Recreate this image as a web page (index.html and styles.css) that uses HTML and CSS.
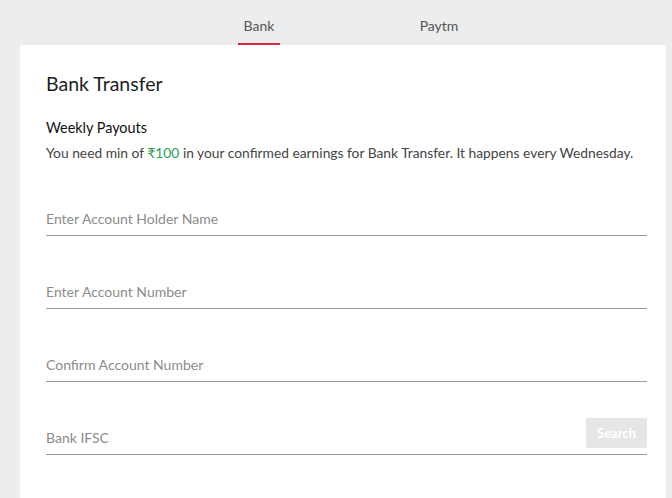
FILE: index.html
```html
<!DOCTYPE html>
<html>
<head>
<meta charset="utf-8">
<link rel="stylesheet" href="styles.css">
</head>
<body>
<nav class="tabs">
  <div class="tab"><span class="tab-label active">Bank</span></div>
  <div class="tab"><span class="tab-label">Paytm</span></div>
</nav>
<main class="card">
  <h1 class="title">Bank Transfer</h1>
  <h2 class="subtitle">Weekly Payouts</h2>
  <p class="desc">You need min of <span class="amount">₹100</span> in your confirmed earnings for Bank Transfer. It happens every Wednesday.</p>
  <form class="form">
    <div class="field"><input class="input" type="text" placeholder="Enter Account Holder Name"></div>
    <div class="field"><input class="input" type="text" placeholder="Enter Account Number"></div>
    <div class="field"><input class="input" type="text" placeholder="Confirm Account Number"></div>
    <div class="field field-search"><input class="input" type="text" placeholder="Bank IFSC"><button type="button" class="search-btn">Search</button></div>
  </form>
</main>
</body>
</html>
```
FILE: styles.css
```css
html, body {
  margin: 0;
  padding: 0;
  height: 100%;
}
body {
  background: #ebedee;
  font-family: Lato, "Open Sans", sans-serif;
  color: #222;
  display: flex;
  flex-direction: column;
}
.tabs {
  display: flex;
  height: 45px;
  padding-left: 169px;
}
.tab {
  width: 180px;
  display: flex;
  justify-content: center;
  align-items: flex-end;
}
.tab-label {
  font-size: 14px;
  color: #555;
  padding: 3px 6px 0;
  height: 32px;
  line-height: 20px;
  box-sizing: border-box;
  border-bottom: 2px solid transparent;
}
.tab-label.active {
  border-bottom-color: #d7263f;
}
.card {
  flex: 1;
  background: #fff;
  margin-left: 20px;
  width: 646px;
  box-sizing: border-box;
  padding: 27px 19px 0 26px;
}
.title {
  margin: 0;
  font-size: 19.5px;
  line-height: 24px;
  font-weight: 400;
  color: #1e1e1e;
}
.subtitle {
  margin: 23px 0 0;
  font-size: 14.4px;
  line-height: 18px;
  font-weight: 400;
  color: #111;
}
.desc {
  margin: 7px 0 0;
  font-size: 13.8px;
  line-height: 18px;
  color: #444;
}
.amount {
  color: #2b9b58;
}
.form {
  margin-top: 1px;
  display: flex;
  flex-direction: column;
}
.field {
  height: 73px;
  display: flex;
  align-items: flex-end;
  position: relative;
}
.input {
  flex: 1;
  border: 0;
  border-bottom: 1px solid #999;
  padding: 0 0 7px;
  font-family: inherit;
  font-size: 14px;
  line-height: 18px;
  color: #333;
  outline: none;
  background: transparent;
}
.input::placeholder {
  color: #8c8c8c;
}
.search-btn {
  position: absolute;
  right: 0;
  bottom: 7px;
  width: 61px;
  height: 30px;
  border: 0;
  background: #e6e6e6;
  color: #fff;
  font-family: inherit;
  font-size: 13px;
  font-weight: 700;
  border-radius: 2px;
}
```
